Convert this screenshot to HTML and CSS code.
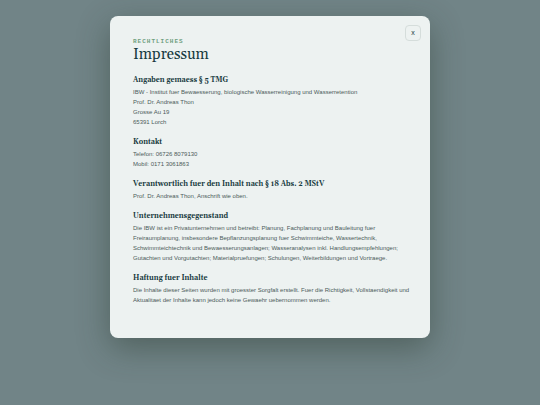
FILE: index.html
```html
<!DOCTYPE html>
<html lang="de">
<head>
  <meta charset="UTF-8" />
  <meta name="viewport" content="width=device-width, initial-scale=1" />
  <title>Impressum</title>
  <link rel="stylesheet" href="styles.css">
</head>
<body>

  <div class="overlay">
    <div class="modal" role="dialog" aria-modal="true" aria-labelledby="modal-title">
      <button class="modal-close" type="button" aria-label="Schliessen">x</button>

      <p class="eyebrow">Rechtliches</p>
      <h1 id="modal-title">Impressum</h1>

      <section>
        <h2>Angaben gemaess § 5 TMG</h2>
        <p>
          IBW - Institut fuer Bewaesserung, biologische Wasserreinigung und Wasserretention<br>
          Prof. Dr. Andreas Thon<br>
          Grosse Au 19<br>
          65391 Lorch
        </p>
      </section>

      <section>
        <h2>Kontakt</h2>
        <p>
          Telefon: 06726 8079130<br>
          Mobil: 0171 3061863
        </p>
      </section>

      <section>
        <h2>Verantwortlich fuer den Inhalt nach § 18 Abs. 2 MStV</h2>
        <p>Prof. Dr. Andreas Thon, Anschrift wie oben.</p>
      </section>

      <section>
        <h2>Unternehmensgegenstand</h2>
        <p>
          Die IBW ist ein Privatunternehmen und betreibt: Planung, Fachplanung und Bauleitung fuer
          Freiraumplanung, insbesondere Bepflanzungsplanung fuer Schwimmteiche, Wassertechnik,
          Schwimmteichtechnik und Bewaesserungsanlagen; Wasseranalysen inkl. Handlungsempfehlungen;
          Gutachten und Vorgutachten; Materialpruefungen; Schulungen, Weiterbildungen und Vortraege.
        </p>
      </section>

      <section>
        <h2>Haftung fuer Inhalte</h2>
        <p>
          Die Inhalte dieser Seiten wurden mit groesster Sorgfalt erstellt. Fuer die Richtigkeit, Vollstaendigkeit und
          Aktualitaet der Inhalte kann jedoch keine Gewaehr uebernommen werden.
        </p>
      </section>
    </div>
  </div>

</body>
</html>
```
FILE: styles.css
```css
:root {
  --ink: #173a40;
  --text: #4c5b5a;
  --green: #6f9f7e;
  --panel: #edf2f1;
  --backdrop: #718487;
}

* {
  box-sizing: border-box;
}

body {
  margin: 0;
  background: var(--backdrop);
  color: var(--text);
  font-family: "Liberation Sans", Arial, sans-serif;
  font-size: 6px;
  line-height: 10px;
}

.overlay {
  min-height: 100vh;
  padding: 16px;
}

.modal {
  position: relative;
  max-width: 320px;
  margin: 0 auto;
  padding: 23px 18px 33px 23px;
  border-radius: 8px;
  background: var(--panel);
  box-shadow: 0 10px 32px rgba(40, 55, 45, 0.45);
}

.modal-close {
  position: absolute;
  top: 9px;
  right: 9px;
  width: 16px;
  height: 16px;
  padding: 0;
  border: 1px solid #d5dddb;
  border-radius: 4px;
  background: transparent;
  color: var(--ink);
  font-family: inherit;
  font-size: 7px;
  line-height: 12px;
  cursor: pointer;
}

h1,
h2,
p {
  margin: 0;
}

h1,
h2 {
  color: var(--ink);
  font-family: Georgia, Gelasio, "Liberation Serif", serif;
}

.eyebrow {
  color: var(--green);
  font-family: "Liberation Mono", monospace;
  font-size: 6px;
  font-weight: 700;
  line-height: 6px;
  letter-spacing: 1px;
  text-transform: uppercase;
}

h1 {
  font-size: 15px;
  font-weight: 400;
  line-height: 20px;
}

section {
  margin-top: 10px;
}

h2 {
  margin-bottom: 2px;
  font-size: 7px;
  line-height: 10px;
}
```
